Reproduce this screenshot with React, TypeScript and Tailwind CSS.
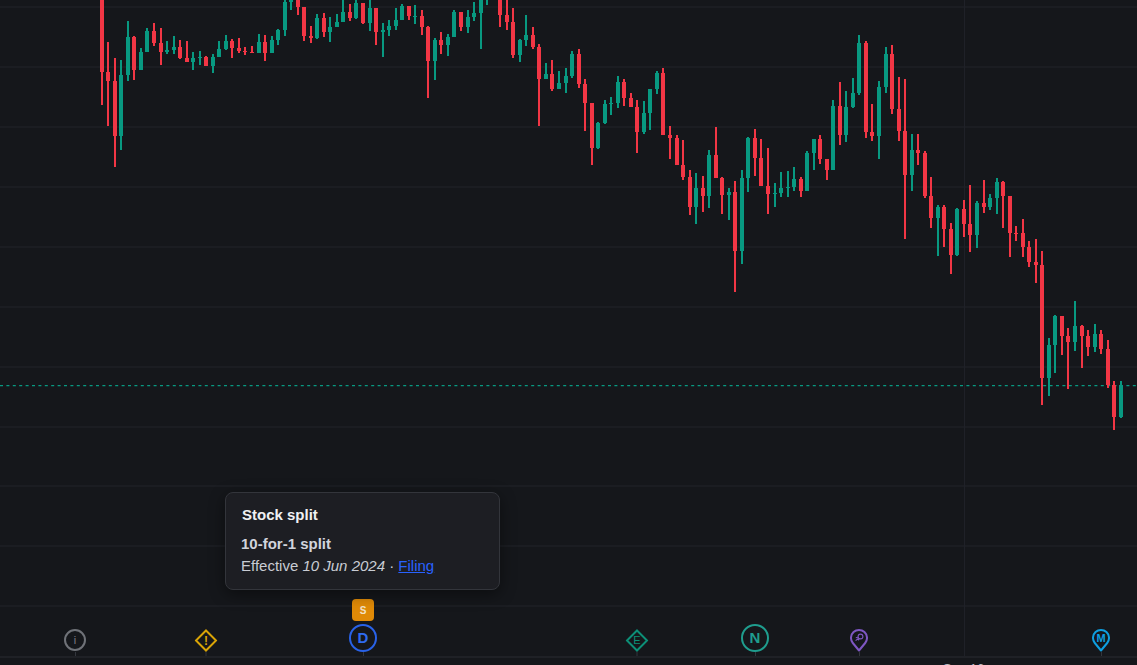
import React from "react";

type C = [number, number, number, number, number, 0 | 1];
// x, wick top, wick bottom, body top, body bottom, up(1)/down(0)
const candles: C[] = [
  [102,0,105,0,72,0],[108,42,126,72,81,0],[115,58,167,81,136,0],[121,60,150,75,136,1],[128,21,81,37,75,1],[134,36,80,37,70,0],
  [141,48,70,52,70,1],[147,28,52,31,52,1],[154,23,46,31,43,0],[161,28,65,43,52,0],[167,41,54,50,52,1],[174,36,54,47,50,1],
  [180,40,59,47,58,0],[187,41,62,58,62,0],[193,52,70,58,62,1],[200,51,65,57,58,1],[206,56,66,57,66,0],[213,54,73,57,66,1],
  [219,41,57,49,57,1],[226,35,50,41,49,1],[232,39,58,41,48,0],[239,38,53,48,51,0],[245,47,55,51,52,0],[252,46,53,52,53,0],
  [259,34,53,42,53,1],[265,35,61,42,53,0],[272,36,53,40,53,1],[278,29,45,30,40,1],[285,0,36,2,30,1],[291,0,10,0,2,1],
  [298,0,15,0,7,0],[304,7,41,7,36,0],[311,26,43,36,38,0],[317,14,39,18,38,1],[324,13,37,18,32,0],[330,17,42,27,32,1],
  [337,14,27,22,27,1],[343,0,22,12,22,1],[350,4,21,12,18,0],[356,0,19,3,18,1],[363,3,24,3,23,0],[370,0,31,8,23,1],
  [376,8,45,8,32,0],[383,23,57,30,32,1],[389,20,36,26,30,1],[396,8,30,20,26,1],[402,4,20,6,20,1],[409,6,20,6,16,0],
  [415,5,24,16,17,1],[422,10,35,16,27,0],[428,26,98,27,61,0],[435,38,80,40,61,1],[441,32,54,40,45,0],[448,34,56,37,45,1],
  [454,10,37,12,37,1],[461,12,31,12,27,0],[468,10,33,17,27,1],[474,2,21,13,17,1],[481,0,49,0,13,1],[487,0,5,0,0,1],
  [500,0,27,0,15,0],[507,0,30,15,22,0],[513,8,58,22,55,0],[520,39,62,40,55,1],[526,15,46,35,40,1],[533,27,49,35,47,0],
  [539,44,126,47,79,0],[546,63,79,74,79,1],[552,60,91,74,89,0],[559,71,89,83,89,1],[566,68,93,76,83,1],[572,51,78,54,76,1],
  [579,49,88,54,84,0],[585,79,131,84,103,0],[592,103,165,103,148,0],[598,122,149,123,148,1],[605,100,124,104,123,1],[611,97,115,103,104,1],
  [618,76,108,82,103,1],[624,79,106,82,98,0],[631,93,107,98,107,0],[637,100,153,107,132,0],[644,101,134,113,132,1],[650,89,130,89,113,1],
  [657,71,94,73,89,1],[663,68,135,73,135,0],[670,126,159,135,138,0],[677,135,165,138,165,0],[683,140,180,165,177,0],[690,170,215,177,207,0],
  [696,173,224,188,207,1],[703,176,212,188,196,0],[709,150,208,155,196,1],[716,127,178,155,178,0],[722,177,214,178,195,0],[729,188,220,192,195,1],
  [735,181,292,192,251,0],[742,170,264,178,251,1],[748,137,192,138,178,1],[755,129,176,138,158,0],[761,139,186,158,186,0],[768,148,214,186,194,0],
  [775,183,207,193,194,1],[781,172,197,188,193,1],[788,171,197,187,188,1],[794,167,191,179,187,1],[801,177,197,179,191,0],[807,151,191,153,191,1],
  [814,139,170,139,153,1],[820,135,164,139,159,0],[827,159,180,159,170,0],[833,100,170,106,170,1],[840,82,145,106,135,0],[846,91,142,107,135,1],
  [853,78,108,93,107,1],[859,35,95,43,93,1],[866,41,138,43,132,0],[872,104,141,132,136,0],[879,81,159,87,136,1],[886,47,93,54,87,1],
  [892,45,114,54,109,0],[899,77,141,109,131,0],[905,79,239,131,175,0],[912,134,191,150,175,1],[918,134,165,150,153,0],[925,151,198,153,196,0],
  [931,177,228,196,218,0],[938,205,256,207,218,1],[944,205,247,207,229,0],[951,223,274,229,255,0],[957,208,256,209,255,1],[964,200,237,209,224,0],
  [970,185,252,224,235,0],[977,201,248,203,235,1],[984,180,213,203,207,0],[990,194,210,198,207,1],[997,178,214,182,198,1],[1003,181,228,182,196,0],
  [1010,196,257,196,233,0],[1016,226,241,233,234,0],[1023,219,257,233,247,0],[1029,241,267,247,262,0],[1036,239,283,262,265,0],[1042,251,405,265,378,0],
  [1049,338,396,345,378,1],[1055,315,373,316,345,1],[1062,316,355,316,336,0],[1068,328,389,336,342,0],[1075,301,351,326,342,1],[1082,325,368,326,336,0],
  [1088,330,356,336,347,0],[1095,324,352,334,347,1],[1101,330,354,334,349,0],[1108,340,388,349,385,0],[1114,381,430,385,417,0],[1121,381,418,385,417,1],
];

const gridYs = [6, 66, 126, 186, 246, 306, 366, 426, 485, 545, 605];

function Chart() {
  return (
    <svg width={1137} height={656} viewBox="0 0 1137 656" className="block">
      {gridYs.map((y) => (
        <rect key={y} x={0} y={y} width={1137} height={2} fill="#1b1d22" />
      ))}
      <rect x={964} y={0} width={1} height={656} fill="#1f2128" />
      <line x1={0} x2={1137} y1={385.7} y2={385.7} stroke="#089981" strokeWidth={1.3} strokeDasharray="3 3.4" />
      {candles.map(([x, wt, wb, bt, bb, up]) => {
        const col = up ? "#089981" : "#f23645";
        return (
          <g key={x} fill={col}>
            <rect x={x - 1} y={wt} width={2} height={wb - wt} />
            {bb > bt && <rect x={x - 2} y={bt} width={4} height={bb - bt} />}
          </g>
        );
      })}
    </svg>
  );
}

// An event pin on the time axis: its place on the chart is the content itself.
function Marker({ x, children }: { x: number; children: React.ReactNode }) {
  return (
    <div className="absolute bottom-0 flex -translate-x-1/2 flex-col items-center" style={{ left: x }}>
      {children}
      <div className="h-[4px] w-px bg-[#33363d]" />
    </div>
  );
}

function Diamond({ color, children }: { color: string; children: React.ReactNode }) {
  return (
    <div className="relative flex h-[23px] w-[23px] items-center justify-center">
      <svg width={23} height={23} viewBox="0 0 23 23" className="absolute inset-0">
        <path d="M11.5 1.5 L21.5 11.5 L11.5 21.5 L1.5 11.5 Z" fill="none" stroke={color} strokeWidth={2} />
      </svg>
      {children}
    </div>
  );
}

function Pin({ color, children }: { color: string; children: React.ReactNode }) {
  return (
    <div className="relative flex h-[24px] w-[18px] justify-center">
      <svg width={18} height={24} viewBox="0 0 18 24" className="absolute inset-0">
        <path d="M9 22.5 L2.8 15 A8 8 0 1 1 15.2 15 Z" fill="none" stroke={color} strokeWidth={2} strokeLinejoin="round" />
      </svg>
      {children}
    </div>
  );
}

export default function App() {
  return (
    <div className="relative h-[665px] w-[1137px] overflow-hidden bg-[#15171b] font-['Liberation_Sans',Arial,sans-serif]">
      <Chart />
      {/* time axis */}
      <div className="h-[9px] border-t-2 border-[#1f2126] pl-[943px] pt-[3px] text-[13px] leading-[16px] text-[#b8bbc3]">Sep 16</div>

      {/* event lane, its bottom on the axis */}
      <div className="absolute inset-x-0 top-[590px] h-[66px]">
        <Marker x={75}>
          <div className="mb-px flex h-[22px] w-[22px] items-center justify-center rounded-full border-2 border-[#6f7278] text-[11px] text-[#7b7e85]">i</div>
        </Marker>

        <Marker x={206}>
          <Diamond color="#d9a406">
            <span className="relative text-[12px] font-bold text-[#d9a406]">!</span>
          </Diamond>
        </Marker>

        <Marker x={363}>
          <div className="mb-[3px] flex h-[22px] w-[22px] items-center justify-center rounded-[4px] bg-[#e08a07] text-[10px] font-bold text-[#f2e3c9]">S</div>
          <div className="flex h-[28px] w-[28px] items-center justify-center rounded-full border-2 border-[#2962e8] text-[15px] font-bold text-[#2f6bf0]">D</div>
        </Marker>

        <Marker x={637}>
          <Diamond color="#0c8f77">
            <span className="relative text-[11px] text-[#0c8f77]">E</span>
          </Diamond>
        </Marker>

        <Marker x={755}>
          <div className="flex h-[28px] w-[28px] items-center justify-center rounded-full border-2 border-[#1f9d8e] text-[15px] font-bold text-[#1f9d8e]">N</div>
        </Marker>

        <Marker x={859}>
          <Pin color="#7e57c2">
            <svg width={18} height={24} viewBox="0 0 18 24" className="absolute inset-0">
              <circle cx={10.5} cy={8.5} r={2.4} fill="none" stroke="#7e57c2" strokeWidth={1.1} />
              <path d="M8.6 10.2 L5.6 12.6 M5.8 9.8 L8 9.2 M8.4 12.4 L9.2 10.6" fill="none" stroke="#7e57c2" strokeWidth={1.1} />
            </svg>
          </Pin>
        </Marker>

        <Marker x={1101}>
          <Pin color="#0e9fe0">
            <span className="relative mt-[3px] text-[11px] font-bold leading-[14px] text-[#0e9fe0]">M</span>
          </Pin>
        </Marker>
      </div>

      {/* Tooltip */}
      <div className="absolute left-[225px] top-[492px] h-[98px] w-[275px] rounded-lg border border-[#33353b] bg-[#1d1e23] pl-[15px] pt-[13px] shadow-[0_4px_16px_rgba(0,0,0,0.45)]">
        <div className="pl-px text-[15px] font-bold leading-[18px] text-[#f0f1f3]">Stock split</div>
        <div className="mt-[11px] text-[15px] font-bold leading-[18px] text-[#d1d4dc]">10-for-1 split</div>
        <div className="mt-1 text-[15px] leading-[18px] text-[#c9ccd3]">
          Effective <em>10 Jun 2024</em> · <a href="#" className="text-[#2962ff] underline">Filing</a>
        </div>
      </div>
    </div>
  );
}
